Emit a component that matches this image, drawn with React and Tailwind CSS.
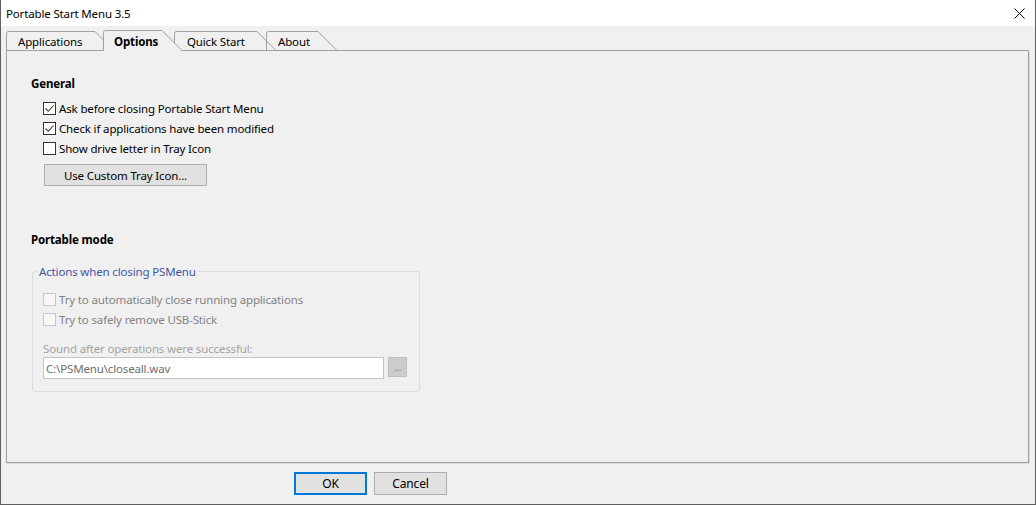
import React from "react";

function Tab({ w, s, label, pl, active, mr }) {
  const top = active ? 0.5 : 1.5;
  const d = `M0.5 21 V${top + 2} Q0.5 ${top} 2.5 ${top} H${s} L${w - 0.5} 21`;
  return (
    <div
      className={`relative h-[21px] shrink-0 ${active ? "z-10" : ""}`}
      style={{ width: w, marginRight: mr }}
    >
      <svg className="absolute inset-0" width={w} height={21} viewBox={`0 0 ${w} 21`}>
        {active ? (
          <path d={`${d} Z`} fill="#f0f0f0" stroke="none" />
        ) : (
          <path d={`M0 20.5 H${w}`} stroke="#a0a0a0" strokeWidth="1" />
        )}
        <path d={d} fill="none" stroke="#a0a0a0" strokeWidth="1" />
      </svg>
      <div
        className={`relative flex h-full items-center pt-[3px] text-black ${
          active ? "font-bold" : ""
        }`}
        style={{ paddingLeft: pl }}
      >
        {label}
      </div>
    </div>
  );
}

function CheckBox({ checked, disabled, label }) {
  return (
    <div className="flex h-[20px] items-center gap-[3px]">
      <div
        className={`flex h-[13px] w-[13px] shrink-0 items-center justify-center border ${
          disabled ? "border-[#c6c6c6] bg-[#f7f7f7]" : "border-[#333333] bg-white"
        }`}
      >
        {checked && (
          <svg width="11" height="11" viewBox="0 0 11 11">
            <path d="M1.5 5.5 L4.3 8.3 L9.5 2.5" fill="none" stroke="#333" strokeWidth="1.1" />
          </svg>
        )}
      </div>
      <span className={`pt-[2px] ${disabled ? "text-[#838383]" : "text-black"}`}>{label}</span>
    </div>
  );
}

export default function App() {
  return (
    <div className="flex h-[505px] w-[1036px] flex-col border-x border-b border-[#5f5f5f] bg-[#f0f0f0] font-['Noto_Sans',sans-serif] text-[11.5px] leading-[16px] tracking-[-0.15px]">
      {/* Title bar */}
      <div className="flex h-[26px] shrink-0 items-center justify-between bg-white pl-[5px] pr-[10px]">
        <span className="pt-[1px] text-[11.5px] text-black">Portable Start Menu 3.5</span>
        <svg width="11" height="11" viewBox="0 0 11 11">
          <path d="M0.5 0.5 L10.5 10.5 M10.5 0.5 L0.5 10.5" stroke="#000" strokeWidth="1" />
        </svg>
      </div>

      {/* Tabs */}
      <div className="mt-[4px] ml-[5px] mr-[6px] flex h-[21px] items-end">
        <Tab w={109} s={89} label="Applications" pl={12} mr={-12} />
        <Tab w={80} s={59} label="Options" pl={11} mr={-9} active />
        <Tab w={103} s={83} label="Quick Start" pl={13} mr={-11} />
        <Tab w={72} s={52} label="About" pl={12} mr={0} />
        <div className="h-[21px] flex-1 border-b border-[#a0a0a0]" />
      </div>

      {/* Panel */}
      <div className="ml-[5px] mr-[6px] flex h-[412px] shrink-0 flex-col border-x border-b border-[#a0a0a0] pl-[24px] pt-[25px] shadow-[1px_1px_0_#dcdcdc]">
        <div className="font-bold text-black">General</div>
        <div className="mt-[6px] flex flex-col pl-[12px]">
          <CheckBox checked label="Ask before closing Portable Start Menu" />
          <CheckBox checked label="Check if applications have been modified" />
          <CheckBox label="Show drive letter in Tray Icon" />
        </div>
        <button className="ml-[13px] mt-[6px] h-[22px] w-[163px] border border-[#adadad] bg-[#e1e1e1] pt-[1px] text-black">
          Use Custom Tray Icon...
        </button>

        <div className="mt-[46px] font-bold text-black">Portable mode</div>

        <fieldset className="ml-[1px] mt-[14px] h-[130px] w-[388px] rounded-[3px] border border-[#dcdcdc]">
          <legend className="ml-[4px] px-[2px] pt-[2px] text-[#3e55a6]">Actions when closing PSMenu</legend>
          <div className="flex flex-col pl-[10px] pt-[9px]">
            <CheckBox disabled label="Try to automatically close running applications" />
            <CheckBox disabled label="Try to safely remove USB-Stick" />
            <div className="mt-[11px] pt-[1px] text-[#a3a3a3]">Sound after operations were successful:</div>
            <div className="flex items-start gap-[4px]">
              <div className="flex h-[22px] w-[341px] items-center border border-[#c4c4c4] bg-white pl-[2px] pt-[1px] text-[#6d6d6d]">
                C:\PSMenu\closeall.wav
              </div>
              <div className="flex h-[20px] w-[19px] items-center justify-center border border-[#bfbfbf] bg-[#cccccc] text-[10px] leading-none text-[#8a8a8a]">
                ...
              </div>
            </div>
          </div>
        </fieldset>
      </div>

      {/* Buttons */}
      <div className="flex gap-[7px] pl-[293px] pt-[9px]">
        <button className="h-[23px] w-[73px] border-2 border-[#0078d7] bg-[#e1e1e1] text-[12px] text-black">OK</button>
        <button className="h-[23px] w-[73px] border border-[#adadad] bg-[#e1e1e1] text-[12px] text-black">Cancel</button>
      </div>
    </div>
  );
}
